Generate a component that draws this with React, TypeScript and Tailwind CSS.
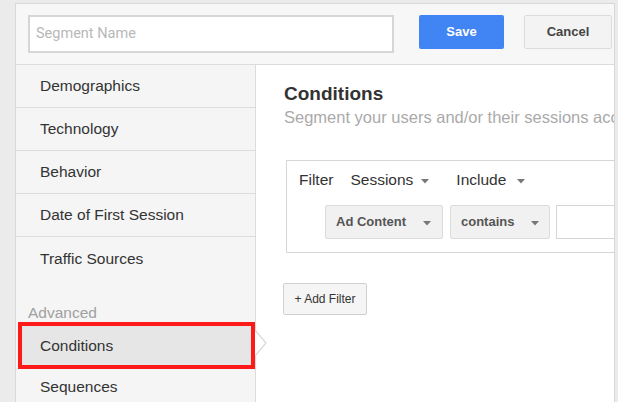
import React from "react";

const Caret = () => (
  <svg width="8" height="5" viewBox="0 0 8 5" className="inline-block">
    <path d="M0 0 L8 0 L4 4.5 Z" fill="#777" />
  </svg>
);

const SideItem = ({ label, last }: { label: string; last?: boolean }) => (
  <div
    className={`h-[43px] flex items-center pl-[24px] text-[15.5px] text-[#333] ${
      last ? "" : "border-b border-[#dcdcdc]"
    }`}
  >
    {label}
  </div>
);

export default function App() {
  return (
    <div
      className="w-[618px] h-[402px] overflow-hidden bg-[#ebebeb] pl-[15px] pt-[3px] pr-[3px]"
      style={{ fontFamily: '"Liberation Sans", Arial, sans-serif' }}
    >
      <div className="h-[420px] bg-white border-l border-t border-r border-[#d8d8d8] flex flex-col">
        {/* header */}
        <div className="h-[61px] shrink-0 bg-[#f7f7f7] border-b border-[#dcdcdc] flex items-start pt-[11px] pl-[12px]">
          <div className="w-[366px] h-[38px] bg-white border-2 border-[#d6d6d6] flex items-center pl-[6px]">
            <span
              className="text-[14.5px] text-[#b8b8b8]"
              style={{ fontFamily: "Roboto, sans-serif" }}
            >
              Segment Name
            </span>
          </div>
          <div className="ml-[25px] w-[85px] h-[34px] rounded-[2px] bg-[#4184f3] flex items-center justify-center text-white text-[13px] font-bold">
            Save
          </div>
          <div className="ml-[20px] w-[88px] h-[34px] rounded-[2px] bg-[#f3f3f3] border border-[#dcdcdc] flex items-center justify-center text-[#444] text-[13px] font-bold">
            Cancel
          </div>
        </div>
        {/* body */}
        <div className="flex flex-1">
          {/* sidebar */}
          <div className="relative w-[240px] shrink-0 bg-[#f5f5f5] border-r border-[#dcdcdc]">
            <SideItem label="Demographics" />
            <SideItem label="Technology" />
            <SideItem label="Behavior" />
            <SideItem label="Date of First Session" />
            <SideItem label="Traffic Sources" last />
            <div className="pt-[24px] pl-[12px] text-[15.5px] text-[#a0a0a0] leading-[18px]">
              Advanced
            </div>
            <div className="ml-[2px] h-[47px] border-[4px] border-[#ff1a1a] bg-[#e6e6e6] flex items-center pl-[18px] text-[15.5px] text-[#333]">
              Conditions
            </div>
            <div className="h-[35px] flex items-center pl-[24px] text-[15.5px] text-[#333]">
              Sequences
            </div>
            <svg
              className="absolute left-[239px] top-[265px]"
              width="12"
              height="26"
              viewBox="0 0 12 26"
            >
              <path d="M0 0 L11 13 L0 26 Z" fill="#ffffff" />
              <path d="M0 0 L11 13 L0 26" fill="none" stroke="#d8d8d8" strokeWidth="1.2" />
            </svg>
          </div>
          {/* main */}
          <div className="flex-1 overflow-hidden pl-[28px] pt-[17px]">
            <div className="text-[19px] font-bold text-[#333] leading-[24px]">Conditions</div>
            <div className="text-[16.5px] text-[#aaaaaa] leading-[22px] whitespace-nowrap">
              Segment your users and/or their sessions according to single or multi-session conditions.
            </div>
            <div className="mt-[32px] ml-[2px] w-[400px] h-[93px] border border-[#d6d6d6] pl-[12px] pt-[9px]">
              <div className="flex items-center text-[15.5px] text-[#333] h-[20px]">
                <span>Filter</span>
                <span className="ml-[17px]">Sessions</span>
                <span className="ml-[8px]"><Caret /></span>
                <span className="ml-[27px]">Include</span>
                <span className="ml-[11px]"><Caret /></span>
              </div>
              <div className="flex items-center mt-[15px] ml-[26px]">
                <div className="w-[118px] h-[34px] bg-[#f1f1f1] border border-[#dcdcdc] rounded-[2px] flex items-center pl-[10px] text-[13px] font-bold text-[#555]">
                  Ad Content
                  <span className="ml-[17px] mt-[1px]"><Caret /></span>
                </div>
                <div className="ml-[7px] w-[100px] h-[34px] bg-[#f1f1f1] border border-[#dcdcdc] rounded-[2px] flex items-center pl-[10px] text-[13px] font-bold text-[#555]">
                  contains
                  <span className="ml-[17px] mt-[1px]"><Caret /></span>
                </div>
                <div className="ml-[6px] w-[120px] h-[34px] bg-white border border-[#d6d6d6]" />
              </div>
            </div>
            <div className="mt-[30px] -ml-[1px] w-[84px] h-[32px] bg-[#f5f5f5] border border-[#d0d0d0] rounded-[2px] flex items-center justify-center text-[12px] text-[#333]">
              + Add Filter
            </div>
          </div>
        </div>
      </div>
    </div>
  );
}
